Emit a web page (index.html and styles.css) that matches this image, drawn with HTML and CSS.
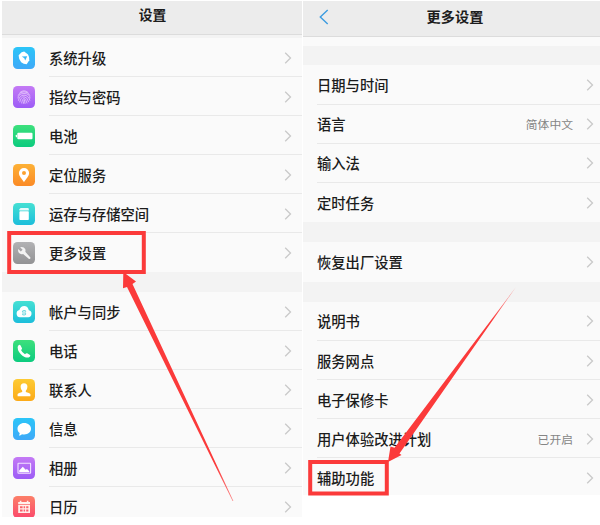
FILE: index.html
```html
<!DOCTYPE html>
<html lang="zh-CN">
<head>
<meta charset="utf-8">
<title>设置</title>
<link rel="stylesheet" href="styles.css">
</head>
<body>
<svg class="defs" width="0" height="0">
  <defs>
    <linearGradient id="blue" x1="0" y1="0" x2="0" y2="1"><stop offset="0" stop-color="#2bc5f8"/><stop offset="1" stop-color="#3fa9f8"/></linearGradient>
    <linearGradient id="purple" x1="0" y1="0" x2="0" y2="1"><stop offset="0" stop-color="#c47af5"/><stop offset="1" stop-color="#9c5cf6"/></linearGradient>
    <linearGradient id="green" x1="0" y1="0" x2="0" y2="1"><stop offset="0" stop-color="#3de07c"/><stop offset="1" stop-color="#0ccb7f"/></linearGradient>
    <linearGradient id="orange" x1="0" y1="0" x2="0" y2="1"><stop offset="0" stop-color="#fdb136"/><stop offset="1" stop-color="#fb8a26"/></linearGradient>
    <linearGradient id="teal" x1="0" y1="0" x2="0" y2="1"><stop offset="0" stop-color="#45e0d3"/><stop offset="1" stop-color="#1cbedb"/></linearGradient>
    <linearGradient id="gray" x1="0" y1="0" x2="0" y2="1"><stop offset="0" stop-color="#b2b2b4"/><stop offset="1" stop-color="#929294"/></linearGradient>
    <linearGradient id="yellow" x1="0" y1="0" x2="0" y2="1"><stop offset="0" stop-color="#fdcb34"/><stop offset="1" stop-color="#fcaa18"/></linearGradient>
    <linearGradient id="red" x1="0" y1="0" x2="0" y2="1"><stop offset="0" stop-color="#fc7f68"/><stop offset="1" stop-color="#fb4a6c"/></linearGradient>
    <symbol id="chev" viewBox="0 0 8 12"><path d="M1.2 .8 6.5 6 1.2 11.2" fill="none" stroke="#c9c9c9" stroke-width="1.3"/></symbol>
  </defs>
</svg>
<main class="screens">
  <section class="phone settings">
    <header class="bar"><h1>设置</h1></header>
    <ul class="group">
      <li class="row"><svg class="icon" viewBox="0 0 22 22"><rect width="22" height="22" rx="4.5" fill="url(#blue)"/><path d="M5.6 8.2 8.6 5.2 11.2 4.6 15 7.4Q16.6 10 16.3 13.2L13.7 17.2Q10.5 17.2 8.2 15.2Q5.6 12.2 5.6 8.2Z" fill="#fff"/><path d="M8.8 9.6 14.2 9.2 12.2 13.6 11.3 11.3Z" fill="#37b8f6"/></svg><span class="label">系统升级</span><svg class="chev"><use href="#chev"/></svg></li>
      <li class="row"><svg class="icon" viewBox="0 0 22 22"><rect width="22" height="22" rx="4.5" fill="url(#purple)"/><g fill="none" stroke="#e9cffc" stroke-width=".75" stroke-linecap="round"><path d="M7 6.4Q11 3 15 6.4M5.3 9Q7 5.8 11 5.8T16.7 9M5 12Q5.1 7.5 11 7.5T17 12M5.5 14.3Q6.6 9.2 11 9.2T16.8 14.2M6.8 16Q7.8 10.8 11 10.8T15.6 15.8M8.6 17Q9.3 12.4 11 12.4T14 17M10.3 17.5Q11 15.5 11.1 14T12 17.5"/></g></svg><span class="label">指纹与密码</span><svg class="chev"><use href="#chev"/></svg></li>
      <li class="row"><svg class="icon" viewBox="0 0 22 22"><rect width="22" height="22" rx="4.5" fill="url(#green)"/><rect x="4.3" y="7.7" width="15.2" height="6.6" rx="1" fill="#fff"/><rect x="2.8" y="9.8" width="1.2" height="2.5" rx=".5" fill="#fff"/></svg><span class="label">电池</span><svg class="chev"><use href="#chev"/></svg></li>
      <li class="row"><svg class="icon" viewBox="0 0 22 22"><rect width="22" height="22" rx="4.5" fill="url(#orange)"/><path fill-rule="evenodd" d="M11 4a5.1 5.1 0 0 1 5.1 5.1C16.1 12.4 12.8 15.3 11 18.2 9.2 15.3 5.9 12.4 5.9 9.1A5.1 5.1 0 0 1 11 4Zm0 3.1a2 2 0 1 0 0 4 2 2 0 0 0 0-4Z" fill="#fff"/></svg><span class="label">定位服务</span><svg class="chev"><use href="#chev"/></svg></li>
      <li class="row"><svg class="icon" viewBox="0 0 22 22"><rect width="22" height="22" rx="4.5" fill="url(#teal)"/><path d="M7.6 5h7.2q1 0 1 1v1.5H6.4V6.2Z" fill="#e6fbfa"/><rect x="6.4" y="8.2" width="9.4" height="8.8" rx=".8" fill="#fff"/></svg><span class="label">运存与存储空间</span><svg class="chev"><use href="#chev"/></svg></li>
      <li class="row"><svg class="icon" viewBox="0 0 22 22"><rect width="22" height="22" rx="4.5" fill="url(#gray)"/><path d="M5.2 7.1 7.8 9.5 9.6 7.8 7.1 5.3Q10.6 4.3 12.2 7.1Q12.8 8.6 12.3 9.8L17.4 15.6Q17.6 17.2 16 17L10.1 12Q7.7 12.8 6 11.1Q4.7 9.4 5.2 7.1Z" fill="#f3f3f3"/></svg><span class="label">更多设置</span><svg class="chev"><use href="#chev"/></svg></li>
    </ul>
    <ul class="group">
      <li class="row"><svg class="icon" viewBox="0 0 22 22"><rect width="22" height="22" rx="4.5" fill="url(#teal)"/><path d="M7 16.2a3.6 3.6 0 0 1-.6-7.1Q7.5 5 11.2 5t4.6 4.3a3.5 3.5 0 0 1-.5 6.9Z" fill="#fff"/><path d="M9.3 11a2 2 0 0 1 3.6-.4M12.9 12.6a2 2 0 0 1-3.6.4M9.2 12h3.8" fill="none" stroke="#70d8df" stroke-width="1.1"/></svg><span class="label">帐户与同步</span><svg class="chev"><use href="#chev"/></svg></li>
      <li class="row"><svg class="icon" viewBox="0 0 22 22"><rect width="22" height="22" rx="4.5" fill="url(#green)"/><path d="M5.5 5.3Q6.7 4.3 7.6 5.4L9 8.2Q9.3 9 8 10.1Q9.1 12.7 12 14.2Q13.3 12.8 14.2 13.3L17 15Q17.9 15.8 16.8 16.7Q14.7 18.4 11.6 16.9Q7 14.7 5 10Q4 6.6 5.5 5.3Z" fill="#fff"/></svg><span class="label">电话</span><svg class="chev"><use href="#chev"/></svg></li>
      <li class="row"><svg class="icon" viewBox="0 0 22 22"><rect width="22" height="22" rx="4.5" fill="url(#yellow)"/><path d="M11 4.2q3.4 0 3.4 3.6 0 2.6-1.6 4v1.1q3.9.9 4.6 2.2v2.1H4.6v-2.1q.7-1.3 4.6-2.2v-1.1q-1.6-1.4-1.6-4Q7.6 4.2 11 4.2Z" fill="#fff"/></svg><span class="label">联系人</span><svg class="chev"><use href="#chev"/></svg></li>
      <li class="row"><svg class="icon" viewBox="0 0 22 22"><rect width="22" height="22" rx="4.5" fill="url(#blue)"/><path d="M11.2 5.1c3.9 0 6.8 2.5 6.8 5.7s-2.9 5.7-6.8 5.7c-.8 0-1.5-.1-2.2-.3-.8.9-1.9 1.4-3.1 1.4.5-.7.8-1.5.8-2.5-1.4-1-2.2-2.6-2.2-4.3 0-3.2 2.9-5.7 6.7-5.7Z" fill="#fff"/></svg><span class="label">信息</span><svg class="chev"><use href="#chev"/></svg></li>
      <li class="row"><svg class="icon" viewBox="0 0 22 22"><rect width="22" height="22" rx="4.5" fill="url(#purple)"/><rect x="5" y="6.3" width="12.6" height="9.9" rx=".5" fill="none" stroke="#f2e3ff" stroke-width="1.1"/><path d="M6.2 15.2V13.5L9.8 9.7 12.7 12.8 14 11.9 16.3 14.2V15.2Z" fill="#fff"/></svg><span class="label">相册</span><svg class="chev"><use href="#chev"/></svg></li>
      <li class="row"><svg class="icon" viewBox="0 0 22 22"><rect width="22" height="22" rx="4.5" fill="url(#red)"/><path d="M5.2 6h1.6V4.7h1.6V6h5.4V4.7h1.6V6H17v2.2H5.2Z" fill="#fff0ec"/><path fill-rule="evenodd" d="M5.2 9H17v8H5.2ZM7 10.3v1.9h2.6v-1.9Zm3.6 0v1.9h1.5v-1.9Zm2.6 0v1.9h2.2v-1.9ZM7 13.5v1.9h2.6v-1.9Zm3.6 0v1.9h1.5v-1.9Zm2.6 0v1.9h2.2v-1.9Z" fill="#fff0ec"/></svg><span class="label">日历</span><svg class="chev"><use href="#chev"/></svg></li>
    </ul>
  </section>
  <section class="phone more">
    <header class="bar"><svg class="back" viewBox="0 0 10 16"><path d="M8.7.9 1.3 8 8.7 15.1" fill="none" stroke="#3c9ce0" stroke-width="1.4"/></svg><h1>更多设置</h1></header>
    <div class="strip"></div>
    <ul class="group">
      <li class="row"><span class="label">日期与时间</span><svg class="chev"><use href="#chev"/></svg></li>
      <li class="row"><span class="label">语言</span><span class="value">简体中文</span><svg class="chev"><use href="#chev"/></svg></li>
      <li class="row"><span class="label">输入法</span><svg class="chev"><use href="#chev"/></svg></li>
      <li class="row"><span class="label">定时任务</span><svg class="chev"><use href="#chev"/></svg></li>
    </ul>
    <ul class="group">
      <li class="row"><span class="label">恢复出厂设置</span><svg class="chev"><use href="#chev"/></svg></li>
    </ul>
    <ul class="group">
      <li class="row"><span class="label">说明书</span><svg class="chev"><use href="#chev"/></svg></li>
      <li class="row"><span class="label">服务网点</span><svg class="chev"><use href="#chev"/></svg></li>
      <li class="row"><span class="label">电子保修卡</span><svg class="chev"><use href="#chev"/></svg></li>
      <li class="row"><span class="label">用户体验改进计划</span><span class="value">已开启</span><svg class="chev"><use href="#chev"/></svg></li>
      <li class="row"><span class="label">辅助功能</span><svg class="chev"><use href="#chev"/></svg></li>
    </ul>
  </section>
</main>
<svg class="marks" viewBox="0 0 600 525">
  <defs>
    <linearGradient id="fadeA" gradientUnits="userSpaceOnUse" x1="215" y1="465" x2="233" y2="501"><stop offset="0" stop-color="#fb3a3a"/><stop offset="1" stop-color="#fb3a3a" stop-opacity=".6"/></linearGradient>
    <linearGradient id="fadeB" gradientUnits="userSpaceOnUse" x1="492" y1="320" x2="516" y2="287"><stop offset="0" stop-color="#fb3a3a"/><stop offset="1" stop-color="#fb3a3a" stop-opacity=".4"/></linearGradient>
  </defs>
  <g fill="none" stroke="#fb3a3a" stroke-width="4">
    <rect x="9.2" y="233" width="134.6" height="39"/>
    <rect x="310.2" y="462" width="76.6" height="31.5"/>
  </g>
  <path d="M123.3 272 123 288.3 127 287 232.6 501 233.4 501 132.5 284 136 281.5Z" fill="url(#fadeA)"/>
  <path d="M388 462 390.5 446.5 394.5 447.7 516 287 399.5 453.5 401.5 455Z" fill="url(#fadeB)"/>
</svg>
</body>
</html>
```
FILE: styles.css
```css
* { box-sizing: border-box; }

body {
  margin: 0;
  width: 600px;
  height: 525px;
  overflow: hidden;
  position: relative;
  background: #fff;
  color: #1c1c1c;
  font-family: "Noto Sans CJK SC", sans-serif;
}

.defs { position: absolute; }

.screens {
  display: flex;
  align-items: flex-start;
  gap: 1px;
  padding: 1px 0 0 2px;
}

.phone {
  background: #f3f3f3;
  overflow: hidden;
}

.settings { width: 300px; height: 516px; }
.more { flex: 1; height: 494px; }

.bar {
  display: flex;
  align-items: center;
  justify-content: center;
  position: relative;
  background: #ececec;
  border-bottom: 1px solid #dcdcdc;
}

.settings .bar { height: 34px; margin-bottom: 3px; padding-bottom: 8px; }
.more .bar { height: 36px; padding: 0 0 6px 7px; }

h1 {
  margin: 0;
  font-size: 14.2px;
  line-height: 20px;
  font-weight: 700;
}

.settings h1 { padding-left: 1px; font-size: 13.8px; }

.back {
  position: absolute;
  left: 16px;
  top: 8px;
  width: 10px;
  height: 16px;
}

.strip {
  height: 9px;
  margin-bottom: 19.4px;
  background: #fafafa;
}

.group {
  list-style: none;
  margin: 0 0 20px;
  padding: 0 0 0 47px;
  background: #fafafa;
}

.more .group { padding-left: 14px; margin-bottom: 20.2px; }

.row {
  display: flex;
  align-items: center;
  height: 39px;
  padding: 2px 10px 0 0;
  border-bottom: 1px solid #e9e9e9;
}

.row:last-child { border-bottom-color: transparent; }

.more .row { height: 39.2px; padding: 1.2px 6px 0 0; }

.icon {
  width: 22px;
  height: 22px;
  margin-left: -36px;
  margin-right: 14px;
  flex: none;
}

.label {
  flex: 1;
  font-size: 14.3px;
  line-height: 20px;
  font-weight: 500;
  white-space: nowrap;
}

.value {
  margin-right: 13px;
  font-size: 11.8px;
  line-height: 18px;
  color: #858585;
}

.chev { width: 8px; height: 12px; flex: none; }

.marks {
  position: absolute;
  left: 0;
  top: 0;
  width: 600px;
  height: 525px;
  pointer-events: none;
}
```
